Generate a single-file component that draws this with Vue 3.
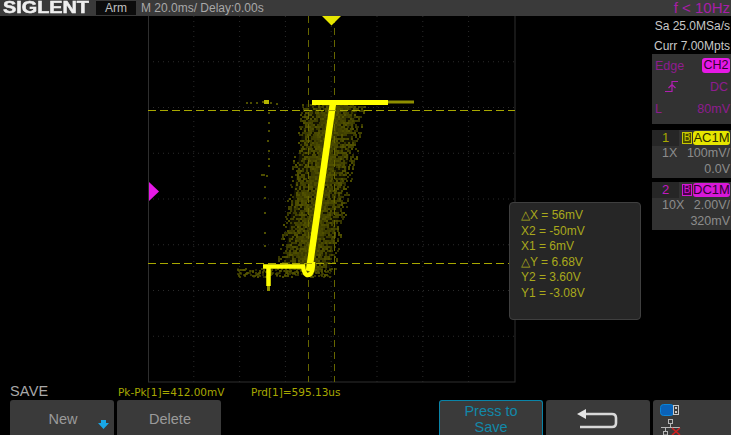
<script setup>
function makeRng(seed) {
  let s = seed
  return () => {
    s = (s * 16807) % 2147483647
    return s / 2147483647
  }
}
const rnd = makeRng(4711)

const vLines = [1, 2, 3, 4, 5, 6, 7].map((i) => 148 + i * 45.8)
const hLines = [1, 2, 3, 4, 5, 6, 7].map((i) => 16 + i * 45.75)

const halo = []
for (let y = 104; y < 272; y += 2) {
  const t = (y - 104) / 168
  const left = 302 - t * 26
  const right = 366 - t * 32
  for (let x = left; x < right; x += 2) {
    const edge = Math.min(x - left, right - x) / 22
    if (rnd() < 0.3 + edge * 0.6) {
      halo.push({ x: Math.round(x), y, o: 0.55 + rnd() * 0.45 })
    }
  }
}
const plateau = []
for (let i = 0; i < 170; i++) {
  const x = 236 + Math.round(rnd() * 94)
  plateau.push({ x, y: 268 + Math.round(rnd() * 8), o: 0.4 + rnd() * 0.5 })
}
const strayDots = [
  [246, 102], [250, 102], [256, 102], [262, 101], [270, 102], [276, 103],
  [268, 112], [268, 122], [268, 130], [267, 140], [268, 150], [268, 158], [268, 165],
  [266, 175], [261, 174], [263, 174], [264, 186], [264, 197], [264, 212], [264, 232], [264, 245]
]
</script>

<template>
  <div class="screen">
    <header class="top">
      <div class="brand"><span class="logo">SIGLENT</span></div>
      <span class="arm">Arm</span>
      <span class="time">M 20.0ms/ Delay:0.00s</span>
      <span class="freq">f &lt; 10Hz</span>
    </header>

    <main class="middle">
      <div class="gutter"></div>
      <div class="scope">
        <svg class="plot" width="368" height="367" viewBox="148 16 368 367">
          <defs>
            <filter id="soft" x="-10%" y="-10%" width="120%" height="120%">
              <feGaussianBlur stdDeviation="0.6" />
            </filter>
          </defs>
          <g stroke="#2b2b2b" stroke-width="1" stroke-dasharray="1 4">
            <line v-for="x in vLines" :key="'v' + x" :x1="x" y1="16" :x2="x" y2="382" />
            <line v-for="y in hLines" :key="'h' + y" x1="148" :y1="y" x2="515" :y2="y" />
          </g>
          <rect x="148.5" y="10" width="366.5" height="372" fill="none" stroke="#2e2e2e" />
          <path d="M 306 104 L 358 104 L 330 268 L 284 268 Z" fill="#141400" />
          <g fill="#545400">
            <rect v-for="(d, i) in halo" :key="'a' + i" :x="d.x" :y="d.y" width="2" height="2" :opacity="d.o" />
            <rect v-for="(d, i) in plateau" :key="'b' + i" :x="d.x" :y="d.y" width="2" height="2" :opacity="d.o" />
          </g>
          <g fill="#4e4e00">
            <rect v-for="(d, i) in strayDots" :key="'c' + i" :x="d[0]" :y="d[1]" width="2" height="2" />
          </g>
          <g stroke="#666600" stroke-width="1" stroke-dasharray="7 5">
            <line x1="308.5" y1="16" x2="308.5" y2="382" />
            <line x1="334.5" y1="16" x2="334.5" y2="382" />
          </g>
          <g fill="none" stroke="#ffff00" stroke-linejoin="round" filter="url(#soft)">
            <path d="M 309 271 L 333 103" stroke-width="6.5" />
            <path d="M 312 102.5 L 388 102.5" stroke-width="5" />
            <path d="M 263 266.5 L 305 266.5" stroke-width="4.5" />
            <path d="M 268.5 266 L 268.5 286" stroke-width="4.5" />
            <path d="M 303 266 Q 304 275 308 275 Q 313 275 313 262" stroke-width="4.5" />
            <path d="M 388 102 L 414 102" stroke="#8f8f00" stroke-width="3" />
            <path d="M 268.5 286 L 268.5 291" stroke="#8f8f00" stroke-width="3" />
            <path d="M 264 102 L 269 102" stroke="#b5b500" stroke-width="4" />
          </g>
          <g stroke="#a8a800" stroke-width="1" stroke-dasharray="8 4">
            <line x1="148" y1="110.5" x2="515" y2="110.5" />
            <line x1="148" y1="263.5" x2="515" y2="263.5" />
          </g>
          <path d="M 322 16 L 341 16 L 331.5 25.5 Z" fill="#e6e600" />
          <path d="M 149 182 L 159 191.5 L 149 201 Z" fill="#e619e6" />
        </svg>
      </div>

      <aside class="cursors">
        <p>△X = 56mV</p>
        <p>X2 = -50mV</p>
        <p>X1 = 6mV</p>
        <p>△Y = 6.68V</p>
        <p>Y2 = 3.60V</p>
        <p>Y1 = -3.08V</p>
      </aside>

      <aside class="side">
        <div class="acq">Sa 25.0MSa/s</div>
        <div class="acq">Curr 7.00Mpts</div>
        <section class="trig">
          <div class="trow">
            <span>Edge</span>
            <span class="chip">CH2</span>
          </div>
          <div class="trow">
            <svg class="edge" width="14" height="13" viewBox="0 0 14 13">
              <path d="M 0 11.5 H 7 V 1.5 H 13 M 3.5 8 L 7 4.5 L 10.5 8" fill="none" stroke="#b01fb0" stroke-width="1.2" />
            </svg>
            <span class="dc">DC</span>
          </div>
          <div class="trow">
            <span>L</span>
            <span>80mV</span>
          </div>
        </section>

        <section class="chan one">
          <div class="chead">
            <span class="num">1</span>
            <span class="bw">B</span>
            <span class="cpl">AC1M</span>
          </div>
          <div class="crow"><span>1X</span><span>100mV/</span></div>
          <div class="crow end"><span>0.0V</span></div>
        </section>

        <section class="chan two">
          <div class="chead">
            <span class="num">2</span>
            <span class="bw">B</span>
            <span class="cpl">DC1M</span>
          </div>
          <div class="crow"><span>10X</span><span>2.00V/</span></div>
          <div class="crow end"><span>320mV</span></div>
        </section>
      </aside>
    </main>

    <div class="labels">
      <span class="save">SAVE</span>
      <span class="meas pk">Pk-Pk[1]=412.00mV</span>
      <span class="meas prd">Prd[1]=595.13us</span>
    </div>

    <footer class="softkeys">
      <button class="key">
        New
        <svg class="more" width="11" height="9" viewBox="0 0 11 9">
          <path d="M 3 0 H 8 V 3 H 11 L 5.5 9 L 0 3 H 3 Z" fill="#19a7e6" />
        </svg>
      </button>
      <button class="key">Delete</button>
      <div class="spacer"></div>
      <button class="key press">Press to<br />Save</button>
      <button class="key back" aria-label="Back">
        <svg width="42" height="22" viewBox="0 0 42 22">
          <path d="M 8 6 H 35 Q 39 6 39 10 V 15 Q 39 19 35 19 H 3" fill="none" stroke="#d8d8d8" stroke-width="2.6" />
          <path d="M 0 6 L 9 1 V 11 Z" fill="#e4e4e4" />
        </svg>
      </button>
      <div class="status">
        <svg width="20" height="12" viewBox="0 0 20 12">
          <rect x="0.5" y="0.5" width="13" height="11" rx="3" fill="#0a62b8" stroke="#0a85d8" />
          <rect x="13.5" y="1.5" width="5" height="9" fill="none" stroke="#c8c8c8" />
          <rect x="15" y="3" width="2" height="2" fill="#c8c8c8" />
          <rect x="15" y="7" width="2" height="2" fill="#c8c8c8" />
        </svg>
        <svg width="22" height="16" viewBox="0 0 22 16">
          <g fill="none" stroke="#b8b8b8">
            <rect x="8.5" y="0.5" width="4" height="4" />
            <path d="M 10.5 4.5 V 8.5 M 1 8.5 H 20 M 5.5 8.5 V 12" />
            <rect x="3.5" y="12.5" width="4" height="3.5" />
          </g>
          <path d="M 12 9 L 20 16 M 20 9 L 12 16" stroke="#d02020" stroke-width="1.6" />
        </svg>
      </div>
    </footer>
  </div>
</template>

<style scoped>
.screen {
  width: 731px;
  height: 435px;
  display: flex;
  flex-direction: column;
  background: #000;
  overflow: hidden;
  font-family: "Liberation Sans", Arial, sans-serif;
  color: #b4b4b4;
}
.top {
  height: 16px;
  flex: none;
  display: flex;
  align-items: center;
  background: #3a3a3a;
}
.brand {
  width: 96px;
  flex: none;
  padding-left: 3px;
  box-sizing: border-box;
}
.logo {
  display: inline-block;
  font-size: 16px;
  font-weight: 700;
  line-height: 16px;
  color: #efefef;
  white-space: nowrap;
  -webkit-text-stroke: 0.5px #efefef;
  transform-origin: left center;
  transform: scaleX(1.24);
}
.arm {
  width: 40px;
  height: 14px;
  line-height: 14px;
  background: #0c0c0c;
  text-align: center;
  font-size: 12px;
  color: #c0c0c0;
}
.time {
  margin-left: 5px;
  font-size: 12px;
  color: #a8a8a8;
}
.freq {
  margin-left: auto;
  padding-right: 1px;
  font-size: 15px;
  color: #a81ea8;
  line-height: 16px;
}
.middle {
  position: relative;
  height: 367px;
  flex: none;
  display: flex;
}
.gutter {
  width: 148px;
  flex: none;
}
.scope {
  width: 368px;
  flex: none;
}
.plot {
  display: block;
}
.cursors {
  position: absolute;
  left: 509px;
  top: 186px;
  width: 132px;
  height: 118px;
  box-sizing: border-box;
  padding: 5px 0 0 11px;
  background: #262626;
  border: 1px solid #3f3f3f;
  border-radius: 4px;
  color: #a9a91c;
  font-size: 12px;
  line-height: 15.6px;
}
.cursors p {
  margin: 0;
  white-space: nowrap;
}
.side {
  width: 79px;
  margin-left: 136px;
  flex: none;
  display: flex;
  flex-direction: column;
}
.acq {
  margin-left: -27px;
  height: 18.5px;
  line-height: 19px;
  padding-top: 1px;
  text-align: right;
  padding-right: 1px;
  font-size: 12px;
  color: #c8c8c8;
  white-space: nowrap;
}
.trig {
  margin-top: -1px;
  height: 70px;
  box-sizing: border-box;
  padding: 1px 1px 0 3px;
  background: #323232;
  color: #8f1c8f;
  font-size: 12.5px;
}
.trow {
  height: 21.5px;
  display: flex;
  align-items: center;
  justify-content: space-between;
}
.trow .edge {
  margin-left: 10px;
  margin-top: -2px;
}
.trow .dc {
  padding-right: 2px;
}
.chip {
  width: 28px;
  height: 15px;
  line-height: 15px;
  text-align: center;
  border-radius: 3px;
  background: #e619e6;
  color: #330033;
}
.chan {
  height: 48px;
  background: #323232;
  font-size: 12.5px;
  color: #8c8c8c;
}
.one {
  margin-top: 6px;
}
.two {
  margin-top: 4px;
}
.chead {
  height: 16px;
  display: flex;
  align-items: center;
  font-size: 13px;
}
.num {
  width: 27px;
  height: 16px;
  line-height: 16px;
  text-align: center;
  background: #262626;
  flex: none;
}
.bw {
  width: 10px;
  height: 12px;
  line-height: 10px;
  margin-left: 3px;
  box-sizing: border-box;
  font-size: 10px;
  text-align: center;
  flex: none;
}
.cpl {
  margin-left: 1px;
  width: 37px;
  height: 14px;
  line-height: 14px;
  border-radius: 3px;
  text-align: center;
  font-size: 13px;
  color: #2c2c00;
}
.one .num {
  color: #a8a800;
}
.one .bw {
  color: #c8c800;
  border: 1px solid #c8c800;
  background: #4a4a00;
}
.one .cpl {
  background: #e6e600;
}
.two .num {
  color: #c018c0;
}
.two .bw {
  color: #d018d0;
  border: 1px solid #d018d0;
  background: #4a004a;
}
.two .cpl {
  background: #d818d8;
  color: #300030;
}
.crow {
  height: 16px;
  line-height: 15px;
  display: flex;
  justify-content: space-between;
  padding: 0 1px 0 10px;
  white-space: nowrap;
}
.crow.end {
  justify-content: flex-end;
}
.labels {
  position: relative;
  height: 17px;
  flex: none;
  display: flex;
  align-items: flex-end;
}
.save {
  width: 118px;
  padding-left: 10px;
  box-sizing: border-box;
  font-size: 14.5px;
  line-height: 17px;
  color: #a8a8a8;
  letter-spacing: 0.2px;
}
.meas {
  font-family: "DejaVu Sans", sans-serif;
  font-size: 10.5px;
  color: #a8a800;
  line-height: 16px;
  white-space: nowrap;
}
.pk {
  width: 133px;
}
.softkeys {
  height: 35px;
  flex: none;
  display: flex;
  gap: 3px;
  padding-left: 10px;
}
.key {
  position: relative;
  width: 104px;
  height: 35px;
  padding: 2px 0 0 2px;
  border: 0;
  border-radius: 3px 3px 0 0;
  background: #3a3a3a;
  color: #9a9a9a;
  font: 14.5px/16px "Liberation Sans", Arial, sans-serif;
}
.more {
  position: absolute;
  right: 5px;
  top: 20px;
}
.spacer {
  width: 212px;
}
.press {
  box-sizing: border-box;
  border: 1px solid #0a84a8;
  border-bottom: 0;
  color: #1288a8;
  padding: 1px 0 0;
}
.back {
  display: flex;
  align-items: flex-start;
  justify-content: center;
  padding: 8px 0 0;
  box-sizing: border-box;
}
.status {
  width: 78px;
  height: 35px;
  box-sizing: border-box;
  padding: 4px 0 0 7px;
  background: #3a3a3a;
  border-radius: 3px 0 0 0;
  display: flex;
  flex-direction: column;
  gap: 3px;
}
.status svg {
  display: block;
}
</style>
